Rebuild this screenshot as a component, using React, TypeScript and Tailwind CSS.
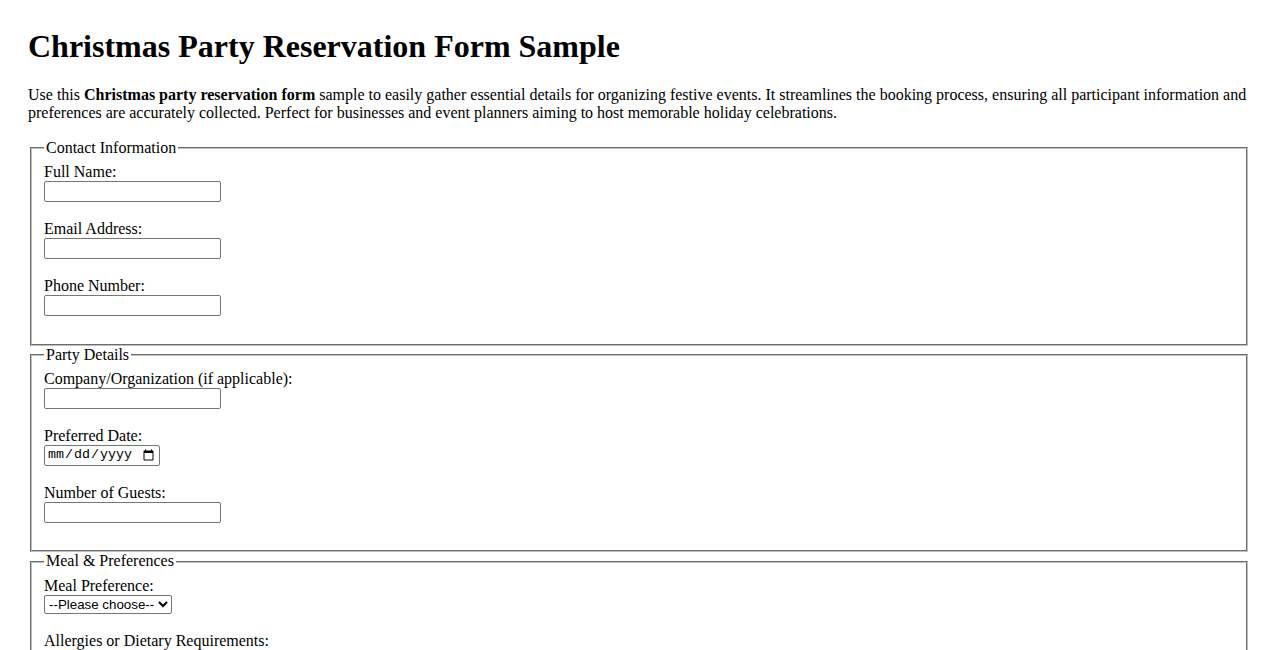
const Field = ({ label, children }: { label: string; children: React.ReactNode }) => (
  <div>
    <label className="block h-[18px]">{label}</label>
    <div className="h-[21px] flex items-start">{children}</div>
    <div className="h-[18px]"></div>
  </div>
);

const TextInput = ({ type = 'text' }: { type?: string }) => (
  <input
    type={type}
    className="w-[177px] h-[21px] border border-[#767676] rounded-[2px] bg-white px-[2px] font-['Liberation_Sans',Arial,sans-serif] text-[13.33px]"
  />
);

const Section = ({ title, children }: { title: string; children: React.ReactNode }) => (
  <fieldset className="mx-0.5 px-3 pt-[6px] pb-[9.5px] border-2 [border-style:groove] border-[#c0c0c0]">
    <legend className="px-0.5 leading-[18.4px]">{title}</legend>
    {children}
  </fieldset>
);

export default function App() {
  return (
    <div className="min-h-screen bg-white text-black font-['Liberation_Serif','Times_New_Roman',serif] text-[16px] leading-[18.4px] px-[28px] pt-[28px] pb-8">
      <h1 className="text-[32px] font-bold leading-[36.8px] mb-[21px]">
        Christmas Party Reservation Form Sample
      </h1>
      <p className="mb-4">
        Use this <strong>Christmas party reservation form</strong> sample to easily gather essential
        details for organizing festive events. It streamlines the booking process, ensuring all
        participant information and preferences are accurately collected. Perfect for businesses and
        event planners aiming to host memorable holiday celebrations.
      </p>

      <form>
        <Section title="Contact Information">
          <Field label="Full Name:">
            <TextInput />
          </Field>
          <Field label="Email Address:">
            <TextInput type="email" />
          </Field>
          <Field label="Phone Number:">
            <TextInput type="tel" />
          </Field>
        </Section>

        <Section title="Party Details">
          <Field label="Company/Organization (if applicable):">
            <TextInput />
          </Field>
          <Field label="Preferred Date:">
            <input
              type="date"
              className="w-[116px] h-[21px] border border-[#767676] rounded-[2px] bg-white px-[2px] font-['Liberation_Mono',monospace] text-[13.33px]"
            />
          </Field>
          <Field label="Number of Guests:">
            <TextInput type="number" />
          </Field>
        </Section>

        <Section title="Meal & Preferences">
          <div>
            <label className="block h-[18px]">Meal Preference:</label>
            <div className="h-[19px] flex items-start">
              <select className="w-[128px] h-[19px] border border-[#767676] rounded-[2px] bg-white font-['Liberation_Sans',Arial,sans-serif] text-[13.33px]">
                <option>--Please choose--</option>
                <option>Traditional Turkey</option>
                <option>Vegetarian</option>
                <option>Vegan</option>
                <option>Gluten-Free</option>
              </select>
            </div>
            <div className="h-[18px]"></div>
          </div>
          <Field label="Allergies or Dietary Requirements:">
            <TextInput />
          </Field>
          <div>
            <label className="block h-[18px]">Special Requests:</label>
            <textarea className="w-[177px] h-[36px] border border-[#767676] rounded-[2px] bg-white font-['Liberation_Mono',monospace] text-[13.33px]"></textarea>
          </div>
        </Section>

        <div className="mt-4">
          <button
            type="submit"
            className="px-[6px] py-[1px] border border-[#767676] rounded-[2px] bg-[#efefef] font-['Liberation_Sans',Arial,sans-serif] text-[13.33px]"
          >
            Submit Reservation
          </button>
        </div>
      </form>
    </div>
  );
}
